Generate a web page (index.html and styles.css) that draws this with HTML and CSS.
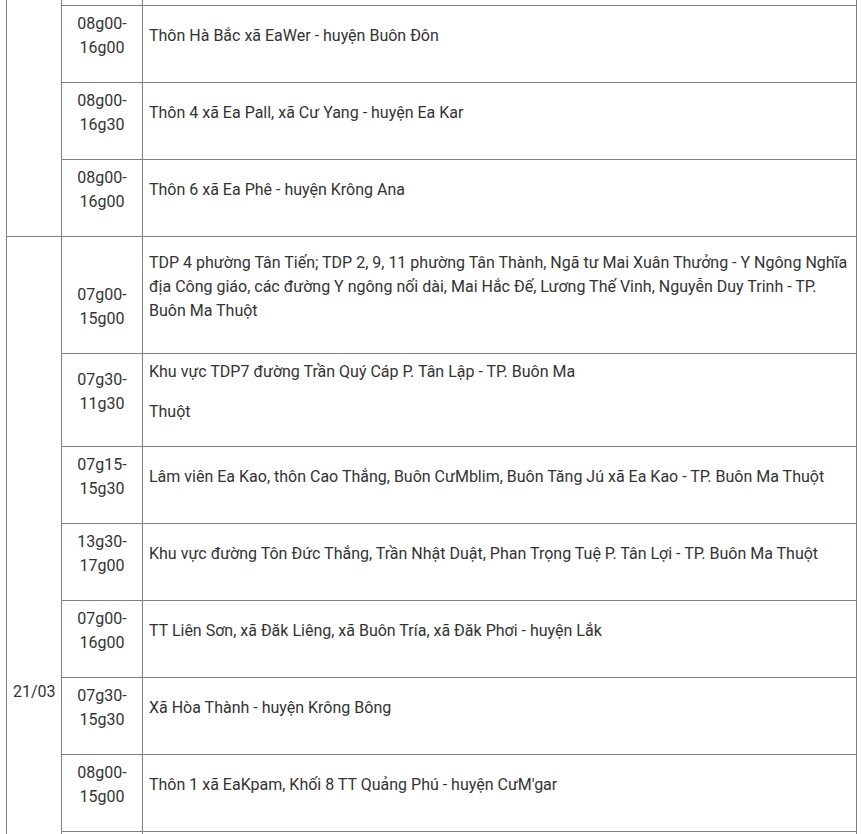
FILE: index.html
```html
<!DOCTYPE html>
<html lang="vi">
<head>
<meta charset="utf-8">
<title>Lịch cắt điện</title>
<link rel="stylesheet" href="styles.css">
</head>
<body>
<div class="page">
<table class="schedule">
  <colgroup>
    <col class="c-date">
    <col class="c-time">
    <col class="c-place">
  </colgroup>
  <tbody>
    <tr>
      <td class="date" rowspan="8"><p>20/03</p></td>
      <td class="time"><p>07g00-<br>15g00</p></td>
      <td class="place"><p>Thôn 3 xã Ea Tu - TP. Buôn Ma Thuột</p></td>
    </tr>
    <tr>
      <td class="time"><p>07g30-<br>16g00</p></td>
      <td class="place"><p>Buôn Kô Tam xã Ea Tu - TP. Buôn Ma Thuột</p></td>
    </tr>
    <tr>
      <td class="time"><p>08g00-<br>15g30</p></td>
      <td class="place"><p>Thôn 1, thôn 2 xã Hòa Phú - TP. Buôn Ma Thuột</p></td>
    </tr>
    <tr>
      <td class="time"><p>07g00-<br>16g00</p></td>
      <td class="place"><p>Xã Ea Tiêu - huyện Cư Kuin</p></td>
    </tr>
    <tr>
      <td class="time"><p>08g00-<br>16g00</p></td>
      <td class="place"><p>Thôn 5 xã Ea Hồ - huyện Krông Năng</p></td>
    </tr>
    <tr>
      <td class="time"><p>08g00-<br>16g00</p></td>
      <td class="place"><p>Thôn Hà Bắc xã EaWer - huyện Buôn Đôn</p></td>
    </tr>
    <tr>
      <td class="time"><p>08g00-<br>16g30</p></td>
      <td class="place"><p>Thôn 4 xã Ea Pall, xã Cư Yang - huyện Ea Kar</p></td>
    </tr>
    <tr>
      <td class="time"><p>08g00-<br>16g00</p></td>
      <td class="place"><p>Thôn 6 xã Ea Phê - huyện Krông Ana</p></td>
    </tr>
    <tr>
      <td class="date" rowspan="11"><p>21/03</p></td>
      <td class="time"><p>&nbsp;</p><p>07g00-<br>15g00</p></td>
      <td class="place"><p>TDP 4 phường Tân Tiến; TDP 2, 9, 11 phường Tân Thành, Ngã tư Mai Xuân Thưởng - Y Ngông Nghĩa địa Công giáo, các đường Y ngông nối dài, Mai Hắc Đế, Lương Thế Vinh, Nguyễn Duy Trinh - TP. Buôn Ma Thuột</p></td>
    </tr>
    <tr>
      <td class="time"><p>07g30-<br>11g30</p></td>
      <td class="place"><p>Khu vực TDP7 đường Trần Quý Cáp P. Tân Lập - TP. Buôn Ma</p><p>Thuột</p></td>
    </tr>
    <tr>
      <td class="time"><p>07g15-<br>15g30</p></td>
      <td class="place"><p>Lâm viên Ea Kao, thôn Cao Thắng, Buôn CưMblim, Buôn Tăng Jú xã Ea Kao - TP. Buôn Ma Thuột</p></td>
    </tr>
    <tr>
      <td class="time"><p>13g30-<br>17g00</p></td>
      <td class="place"><p>Khu vực đường Tôn Đức Thắng, Trần Nhật Duật, Phan Trọng Tuệ P. Tân Lợi - TP. Buôn Ma Thuột</p></td>
    </tr>
    <tr>
      <td class="time"><p>07g00-<br>16g00</p></td>
      <td class="place"><p>TT Liên Sơn, xã Đăk Liêng, xã Buôn Tría, xã Đăk Phơi - huyện Lắk</p></td>
    </tr>
    <tr>
      <td class="time"><p>07g30-<br>15g30</p></td>
      <td class="place"><p>Xã Hòa Thành - huyện Krông Bông</p></td>
    </tr>
    <tr>
      <td class="time"><p>08g00-<br>15g00</p></td>
      <td class="place"><p>Thôn 1 xã EaKpam, Khối 8 TT Quảng Phú - huyện CưM'gar</p></td>
    </tr>
    <tr>
      <td class="time"><p>07g00-<br>17g00</p></td>
      <td class="place"><p>Thôn 2, thôn 3, thôn 5, buôn Ea Kmar xã Ea Tul; thôn 1, thôn 4, thôn 6, buôn Trưng xã Ea Drơng, thôn Tân Lập, thôn Tân Thành, thôn Tân Hòa, thôn Tân Phú xã Cư Pơng, thôn 2, thôn 7 xã Ea Kiết - huyện Cư M'gar</p></td>
    </tr>
    <tr>
      <td class="time"><p>08g00-<br>16g00</p></td>
      <td class="place"><p>Thôn 7 xã Ea Na - huyện Krông Ana</p></td>
    </tr>
    <tr>
      <td class="time"><p>07g30-<br>16g30</p></td>
      <td class="place"><p>Thôn Đoàn Kết xã Ea Ral - huyện Ea H'leo</p></td>
    </tr>
    <tr>
      <td class="time"><p>08g00-<br>15g30</p></td>
      <td class="place"><p>Thôn 3 xã Ea Kly - huyện Krông Pắc</p></td>
    </tr>
  </tbody>
</table>
</div>
</body>
</html>
```

FILE: styles.css
```css
html, body {
  margin: 0;
  padding: 0;
  background: #ffffff;
}

body {
  font-family: Roboto, "Noto Sans", sans-serif;
  font-size: 16px;
  color: #333333;
}

.page {
  padding: 0 6px;
  margin-top: -380px;
}

.schedule {
  border-collapse: collapse;
  width: 850px;
  table-layout: fixed;
}

.c-date { width: 55px; }
.c-time { width: 81px; }
.c-place { width: 714px; }

.schedule td {
  border: 1px solid #808080;
  padding: 6px 6px;
  vertical-align: middle;
  line-height: 24px;
}

.schedule td p {
  margin: 0 0 16px;
}

.schedule td.date,
.schedule td.time {
  text-align: center;
}

.schedule td.place {
  text-align: left;
}
```
